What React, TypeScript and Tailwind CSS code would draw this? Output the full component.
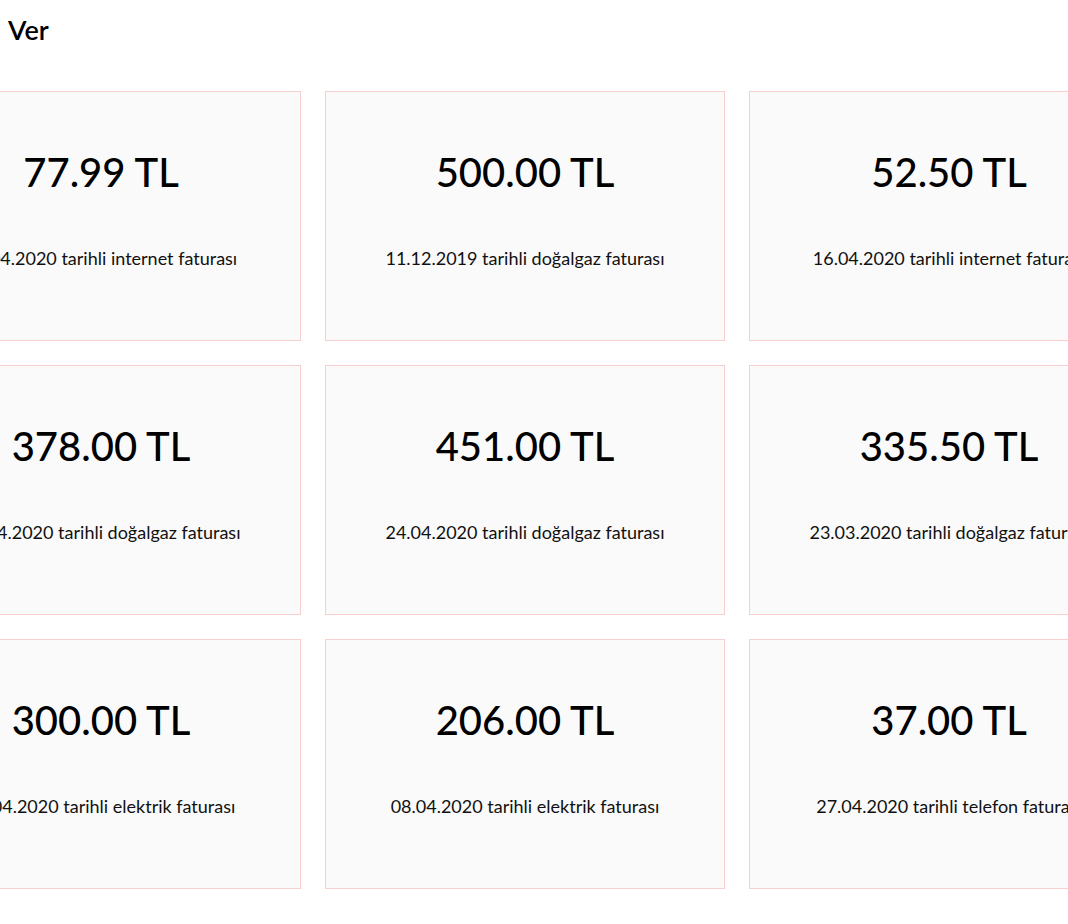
const bills = [
  { amount: '77.99 TL', desc: '18.04.2020 tarihli internet faturası' },
  { amount: '500.00 TL', desc: '11.12.2019 tarihli doğalgaz faturası' },
  { amount: '52.50 TL', desc: '16.04.2020 tarihli internet faturası' },
  { amount: '378.00 TL', desc: '12.04.2020 tarihli doğalgaz faturası' },
  { amount: '451.00 TL', desc: '24.04.2020 tarihli doğalgaz faturası' },
  { amount: '335.50 TL', desc: '23.03.2020 tarihli doğalgaz faturası' },
  { amount: '300.00 TL', desc: '14.04.2020 tarihli elektrik faturası' },
  { amount: '206.00 TL', desc: '08.04.2020 tarihli elektrik faturası' },
  { amount: '37.00 TL', desc: '27.04.2020 tarihli telefon faturası' },
]

function BillCard({ amount, desc }: { amount: string; desc: string }) {
  return (
    <div className="h-[250px] border border-[#f8cfcf] bg-[#fafafa] flex flex-col items-center pt-[56px]">
      <span className="text-[40px] leading-[48px] font-medium text-black">{amount}</span>
      <span className="mt-[50px] text-[18px] leading-6 text-[#111]">{desc}</span>
    </div>
  )
}

export default function App() {
  return (
    <div
      className="w-[1068px] h-[924px] overflow-hidden bg-white"
      style={{ fontFamily: 'Lato, "Noto Sans", sans-serif' }}
    >
      <h1 className="pl-2 pt-[14px] text-[27px] leading-8 font-semibold text-black">Ver</h1>
      <div className="mt-[45px] -ml-[99px] grid grid-cols-[repeat(3,400px)] gap-6">
        {bills.map((b) => (
          <BillCard key={b.amount + b.desc} amount={b.amount} desc={b.desc} />
        ))}
      </div>
    </div>
  )
}
